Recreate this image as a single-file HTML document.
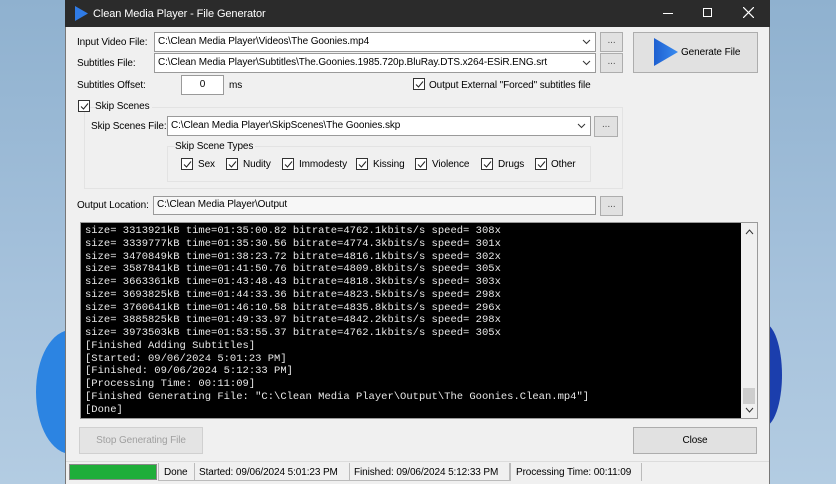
<!DOCTYPE html>
<html><head><meta charset="utf-8"><style>
*{box-sizing:border-box;margin:0;padding:0}
body{width:836px;height:484px;overflow:hidden;background:linear-gradient(180deg,#8fb1cf 0%,#a6c2dc 60%,#b3cce2 100%);font-family:"Liberation Sans",sans-serif;font-size:10px;letter-spacing:-0.1px;color:#000;position:relative}
.a{position:absolute}
.lbl{position:absolute;white-space:nowrap;line-height:12px}
.box{position:absolute;background:#fff;border:1px solid #9a9a9a}
.box span{position:absolute;left:3px;top:3px;white-space:nowrap}
.btn{position:absolute;background:#e1e1e1;border:1px solid #adadad;text-align:center;color:#555}
.cb{position:absolute;width:12px;height:12px;border:1px solid #333;background:#fff}
.cb svg{position:absolute;left:1px;top:1px}
.dd{position:absolute;right:4px;top:4px}
</style></head><body>
<div class="a" style="left:36px;top:330px;width:70px;height:124px;border-radius:50%;background:#2c84e2"></div>
<div class="a" style="left:745px;top:323px;width:37px;height:104px;border-radius:50%;background:#1b3ead"></div>
<div class="a" style="left:65px;top:0;width:705px;height:484px;background:#f0f0f0;border-left:1px solid #777;border-right:1px solid #777"></div>
<div class="a" style="left:65px;top:0;width:705px;height:27px;background:#2b2b2b"></div>
<svg class="a" style="left:74px;top:6px" width="14" height="15"><polygon points="1,0 14,7.5 1,15" fill="#2f7be6"/></svg>
<div class="lbl" style="left:93px;top:8px;color:#fff;font-size:11px">Clean Media Player - File Generator</div>
<div class="a" style="left:663px;top:13px;width:10px;height:1px;background:#fff"></div>
<div class="a" style="left:703px;top:8px;width:9px;height:9px;border:1px solid #fff"></div>
<svg class="a" style="left:743px;top:7px" width="11" height="11"><path d="M0,0L11,11M11,0L0,11" stroke="#fff" stroke-width="1.2"/></svg>

<div class="lbl" style="left:77px;top:37px">Input Video File:</div>
<div class="box" style="left:154px;top:32px;width:442px;height:20px"><span>C:\Clean Media Player\Videos\The Goonies.mp4</span><svg class="dd" width="9" height="10"><path d="M1,3L4.5,6.5L8,3" stroke="#333" fill="none"/></svg></div>
<div class="btn" style="left:600px;top:32px;width:23px;height:20px;line-height:16px">...</div>
<div class="lbl" style="left:77px;top:58px">Subtitles File:</div>
<div class="box" style="left:154px;top:53px;width:442px;height:20px"><span>C:\Clean Media Player\Subtitles\The.Goonies.1985.720p.BluRay.DTS.x264-ESiR.ENG.srt</span><svg class="dd" width="9" height="10"><path d="M1,3L4.5,6.5L8,3" stroke="#333" fill="none"/></svg></div>
<div class="btn" style="left:600px;top:53px;width:23px;height:20px;line-height:16px">...</div>
<div class="btn" style="left:633px;top:32px;width:125px;height:41px;color:#000"></div>
<svg class="a" style="left:653px;top:38px" width="26" height="28"><defs><linearGradient id="g" x1="0" x2="1"><stop offset="0" stop-color="#1d5fd0"/><stop offset="1" stop-color="#3a8cf0"/></linearGradient></defs><polygon points="1,0 25,14 1,28" fill="url(#g)"/></svg>
<div class="lbl" style="left:681px;top:47px">Generate File</div>

<div class="lbl" style="left:77px;top:80px">Subtitles Offset:</div>
<div class="box" style="left:181px;top:75px;width:43px;height:20px;text-align:center;line-height:18px">0</div>
<div class="lbl" style="left:229px;top:80px">ms</div>
<div class="cb" style="left:413px;top:78px"><svg width="9" height="9"><path d="M1,4.5L3.5,7L8,1.5" stroke="#222" fill="none"/></svg></div>
<div class="lbl" style="left:429px;top:80px">Output External "Forced" subtitles file</div>

<div class="a" style="left:84px;top:107px;width:539px;height:82px;border:1px solid #e3e3e3"></div>
<div class="cb" style="left:78px;top:100px"><svg width="9" height="9"><path d="M1,4.5L3.5,7L8,1.5" stroke="#222" fill="none"/></svg></div>
<div class="lbl" style="left:95px;top:101px;background:#f0f0f0;padding-right:2px">Skip Scenes</div>
<div class="lbl" style="left:91px;top:121px">Skip Scenes File:</div>
<div class="box" style="left:167px;top:116px;width:424px;height:20px"><span>C:\Clean Media Player\SkipScenes\The Goonies.skp</span><svg class="dd" width="9" height="10"><path d="M1,3L4.5,6.5L8,3" stroke="#333" fill="none"/></svg></div>
<div class="btn" style="left:594px;top:116px;width:24px;height:21px;line-height:16px">...</div>
<div class="a" style="left:167px;top:146px;width:424px;height:36px;border:1px solid #e3e3e3"></div>
<div class="lbl" style="left:175px;top:141px;background:#f0f0f0;padding-right:2px">Skip Scene Types</div>
<div class="cb" style="left:181px;top:158px"><svg width="9" height="9"><path d="M1,4.5L3.5,7L8,1.5" stroke="#222" fill="none"/></svg></div><div class="lbl" style="left:198px;top:159px">Sex</div>
<div class="cb" style="left:226px;top:158px"><svg width="9" height="9"><path d="M1,4.5L3.5,7L8,1.5" stroke="#222" fill="none"/></svg></div><div class="lbl" style="left:243px;top:159px">Nudity</div>
<div class="cb" style="left:282px;top:158px"><svg width="9" height="9"><path d="M1,4.5L3.5,7L8,1.5" stroke="#222" fill="none"/></svg></div><div class="lbl" style="left:299px;top:159px">Immodesty</div>
<div class="cb" style="left:356px;top:158px"><svg width="9" height="9"><path d="M1,4.5L3.5,7L8,1.5" stroke="#222" fill="none"/></svg></div><div class="lbl" style="left:373px;top:159px">Kissing</div>
<div class="cb" style="left:415px;top:158px"><svg width="9" height="9"><path d="M1,4.5L3.5,7L8,1.5" stroke="#222" fill="none"/></svg></div><div class="lbl" style="left:432px;top:159px">Violence</div>
<div class="cb" style="left:481px;top:158px"><svg width="9" height="9"><path d="M1,4.5L3.5,7L8,1.5" stroke="#222" fill="none"/></svg></div><div class="lbl" style="left:498px;top:159px">Drugs</div>
<div class="cb" style="left:535px;top:158px"><svg width="9" height="9"><path d="M1,4.5L3.5,7L8,1.5" stroke="#222" fill="none"/></svg></div><div class="lbl" style="left:551px;top:159px">Other</div>

<div class="lbl" style="left:77px;top:200px">Output Location:</div>
<div class="box" style="left:153px;top:196px;width:443px;height:19px;background:#f7f7f7"><span style="top:2px">C:\Clean Media Player\Output</span></div>
<div class="btn" style="left:600px;top:196px;width:23px;height:20px;line-height:16px">...</div>

<div class="a" style="left:80px;top:222px;width:678px;height:197px;border:1px solid #9a9a9a;background:#f0f0f0"></div>
<div class="a" style="left:81px;top:223px;width:660px;height:195px;background:#000"></div>
<pre class="a" style="left:85px;top:225px;color:#e8e8e8;font-family:'Liberation Mono',monospace;font-size:10.5px;letter-spacing:0;line-height:12.75px">size= 3313921kB time=01:35:00.82 bitrate=4762.1kbits/s speed= 308x
size= 3339777kB time=01:35:30.56 bitrate=4774.3kbits/s speed= 301x
size= 3470849kB time=01:38:23.72 bitrate=4816.1kbits/s speed= 302x
size= 3587841kB time=01:41:50.76 bitrate=4809.8kbits/s speed= 305x
size= 3663361kB time=01:43:48.43 bitrate=4818.3kbits/s speed= 303x
size= 3693825kB time=01:44:33.36 bitrate=4823.5kbits/s speed= 298x
size= 3760641kB time=01:46:10.58 bitrate=4835.8kbits/s speed= 296x
size= 3885825kB time=01:49:33.97 bitrate=4842.2kbits/s speed= 298x
size= 3973503kB time=01:53:55.37 bitrate=4762.1kbits/s speed= 305x
[Finished Adding Subtitles]
[Started: 09/06/2024 5:01:23 PM]
[Finished: 09/06/2024 5:12:33 PM]
[Processing Time: 00:11:09]
[Finished Generating File: "C:\Clean Media Player\Output\The Goonies.Clean.mp4"]
[Done]</pre>
<svg class="a" style="left:745px;top:228px" width="9" height="8"><path d="M1,6L4.5,2L8,6" stroke="#333" fill="none"/></svg>
<div class="a" style="left:743px;top:388px;width:12px;height:16px;background:#cdcdcd"></div>
<svg class="a" style="left:745px;top:406px" width="9" height="8"><path d="M1,2L4.5,6L8,2" stroke="#333" fill="none"/></svg>

<div class="btn" style="left:79px;top:427px;width:124px;height:27px;line-height:25px;color:#a0a0a0;background:#e4e4e4;border-color:#d0d0d0">Stop Generating File</div>
<div class="btn" style="left:633px;top:427px;width:124px;height:27px;line-height:25px;color:#000">Close</div>

<div class="a" style="left:66px;top:461px;width:703px;height:1px;background:#dcdcdc"></div>
<div class="a" style="left:69px;top:464px;width:88px;height:16px;background:#1fae3a;border:1px solid #888"></div>
<div class="a" style="left:158px;top:463px;width:352px;height:18px;border:1px solid #bbb;border-top:0"></div>
<div class="lbl" style="left:164px;top:467px">Done</div>
<div class="a" style="left:194px;top:463px;width:1px;height:18px;background:#bbb"></div>
<div class="lbl" style="left:199px;top:467px">Started: 09/06/2024 5:01:23 PM</div>
<div class="a" style="left:349px;top:463px;width:1px;height:18px;background:#bbb"></div>
<div class="lbl" style="left:354px;top:467px">Finished: 09/06/2024 5:12:33 PM</div>
<div class="a" style="left:510px;top:463px;width:1px;height:18px;background:#bbb"></div>
<div class="lbl" style="left:516px;top:467px">Processing Time: 00:11:09</div>
<div class="a" style="left:641px;top:463px;width:1px;height:18px;background:#bbb"></div>
</body></html>
